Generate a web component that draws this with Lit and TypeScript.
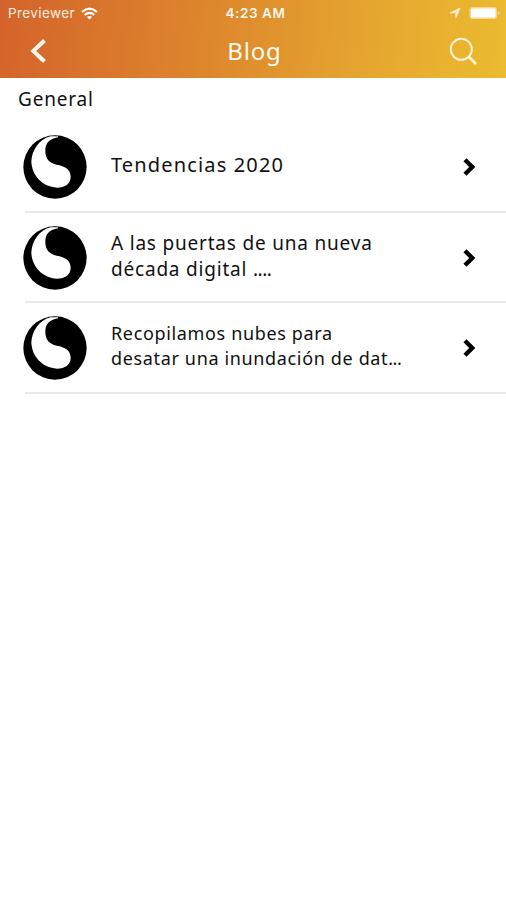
import { LitElement, html, css } from "lit";
import { customElement } from "lit/decorators.js";

interface Post {
  lines: string[];
  dots: string;
  cls: string;
}

const POSTS: Post[] = [
  { lines: ["Tendencias 2020"], dots: "", cls: "one" },
  { lines: ["A las puertas de una nueva", "década digital "], dots: "....", cls: "two" },
  { lines: ["Recopilamos nubes para", "desatar una inundación de dat"], dots: "...", cls: "three" },
];

@customElement("app-root")
export class AppRoot extends LitElement {
  static styles = css`
    :host {
      display: block;
      height: 900px;
      background: #fff;
      color: #111;
      font-family: "Noto Sans", sans-serif;
      overflow: hidden;
    }
    svg { display: block; flex: none; }
    .header {
      height: 78px;
      color: #fff;
      background: linear-gradient(97deg, #d4632b 0%, #de8a2d 45%, #e5a52f 72%, #ebbb30 100%);
    }
    .status {
      display: grid;
      grid-template-columns: 1fr auto 1fr;
      align-items: center;
      height: 26px;
      padding: 0 5px 0 8px;
      box-sizing: border-box;
      font-family: Inter, sans-serif;
      font-size: 13.5px;
      line-height: 26px;
    }
    .carrier { display: flex; align-items: center; gap: 6px; letter-spacing: 0.4px; color: #fff0e4; }
    .clock { font-weight: 600; font-size: 13.5px; letter-spacing: 0.6px; padding-left: 2px; color: #fff8e8; }
    .right { display: flex; align-items: center; justify-content: flex-end; gap: 8px; }
    .nav {
      display: grid;
      grid-template-columns: 1fr auto 1fr;
      align-items: center;
      height: 50px;
      padding: 0 28px 0 30px;
    }
    .title { font-size: 24px; line-height: 50px; letter-spacing: 0.8px; padding-left: 1px; color: #fffaf0; }
    .search { justify-self: end; }
    .section { height: 44px; padding-left: 18px; font-size: 19px; line-height: 43px; letter-spacing: 0.8px; }
    .row {
      display: flex;
      align-items: center;
      box-sizing: border-box;
      height: 90px;
      padding-top: 1px;
      margin-left: 25px;
      border-bottom: 2px solid #e9e9e9;
    }
    .row:first-of-type, .row:last-of-type { height: 91px; }
    .logo { margin-left: -2px; }
    .text { flex: 1; margin-left: 24px; white-space: pre; }
    .one { font-size: 20px; line-height: 26px; letter-spacing: 1.15px; padding-bottom: 4px; }
    .two { font-size: 19px; line-height: 26px; letter-spacing: 0.8px; padding-bottom: 4px; }
    .three { font-size: 18px; line-height: 25px; letter-spacing: 0.65px; padding-bottom: 5px; }
    .dots { letter-spacing: -0.5px; }
    .chev { margin-right: 30px; }
  `;

  private logo() {
    return html`<svg class="logo" width="64" height="64" viewBox="69 46 192 192">
      <circle cx="165" cy="142" r="95" fill="#000" />
      <path fill="#fff" d="M174 50 L174 53 C148 57 135 71 136 96 C137 118 149 130 170 135 C195 139 212 149 212 171 C212 192 195 204 171 204 C127 202 95 167 94 125 C96 90 118 58 152 50Z" />
    </svg>`;
  }

  render() {
    return html`
      <div class="header">
        <div class="status">
          <div class="carrier">
            <span>Previewer</span>
            <svg width="17" height="13" viewBox="0 0 17 13" fill="none" stroke="#fff" stroke-width="2.2">
              <path d="M1 5 Q8.500 -1.800 16 5" />
              <path d="M3.700 7.900 Q8.500 3.800 13.300 7.900" />
              <path d="M8.500 12.600 L5.900 10 Q8.500 7.900 11.100 10Z" fill="#fff" stroke="none" />
            </svg>
          </div>
          <div class="clock">4:23 AM</div>
          <div class="right">
            <svg width="12" height="12" viewBox="0 0 12 12">
              <path d="M1 6 L11 1 L6.900 11 L6.600 6.400 L9 3.300 L5 5.900Z" fill="#fff4dc" stroke="#fff4dc" stroke-width="0.600" />
            </svg>
            <svg width="32" height="14" viewBox="0 0 32 14">
              <rect x="0.500" y="1" width="27.500" height="12" rx="3" fill="#f4d690" />
              <rect x="2" y="2.500" width="24.500" height="9" rx="1" fill="#fff" />
              <path d="M29 5 Q31.500 7 29 9Z" fill="#f6de9f" />
            </svg>
          </div>
        </div>
        <div class="nav">
          <svg width="17" height="26" viewBox="0 0 17 26">
            <path d="M14.500 2.500 L3.300 13 L14.500 23.500" fill="none" stroke="#fff6ec" stroke-width="4" />
          </svg>
          <div class="title">Blog</div>
          <svg class="search" width="29" height="29" viewBox="0 0 29 29" fill="none" stroke="#fff4d8">
            <circle cx="12.300" cy="12.300" r="10.500" stroke-width="2" />
            <path d="M19.500 19.500 L27 27" stroke-width="2.600" />
          </svg>
        </div>
      </div>
      <div class="section">General</div>
      <main>
        ${POSTS.map(
          (p) => html`<div class="row">
            ${this.logo()}
            <div class="text ${p.cls}">${p.lines.map(
              (l, i) => html`<div>${l}${i === p.lines.length - 1 && p.dots ? html`<span class="dots">${p.dots}</span>` : ""}</div>`
            )}</div>
            <svg class="chev" width="14" height="20" viewBox="0 0 14 20">
              <path d="M3 2.800 L10.200 10 L3 17.200" fill="none" stroke="#000" stroke-width="4.400" />
            </svg>
          </div>`
        )}
      </main>
    `;
  }
}
